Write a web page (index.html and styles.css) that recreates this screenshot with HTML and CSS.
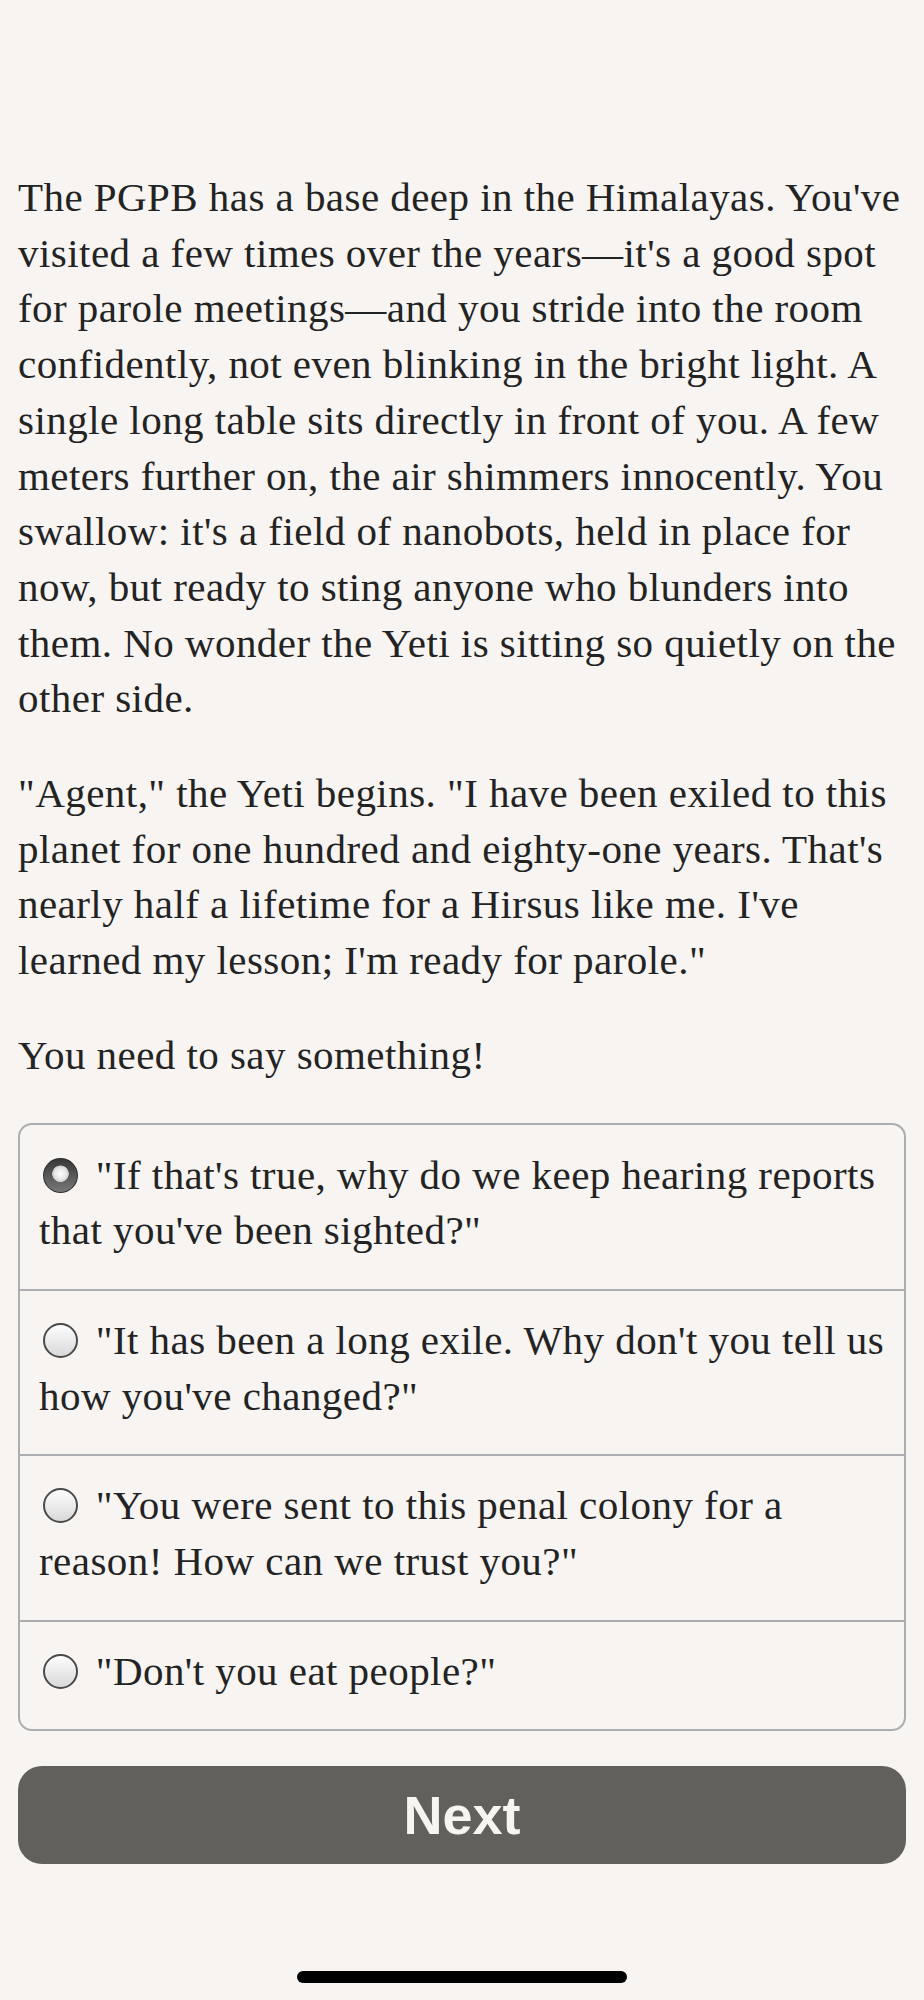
FILE: index.html
```html
<!DOCTYPE html>
<html lang="en">
<head>
  <meta charset="UTF-8" />
  <meta name="viewport" content="width=device-width, initial-scale=1.0"/>
  <title>Parole Hearing</title>
  <link rel="stylesheet" href="styles.css">
</head>
<body>

  <div class="story">
    <p>The PGPB has a base deep in the Himalayas. You've visited a few times over the years&mdash;it's a good spot for parole meetings&mdash;and you stride into the room confidently, not even blinking in the bright light. A single long table sits directly in front of you. A few meters further on, the air shimmers innocently. You swallow: it's a field of nanobots, held in place for now, but ready to sting anyone who blunders into them. No wonder the Yeti is sitting so quietly on the other side.</p>
    <p>"Agent," the Yeti begins. "I have been exiled to this planet for one hundred and eighty-one years. That's nearly half a lifetime for a Hirsus like me. I've learned my lesson; I'm ready for parole."</p>
    <p>You need to say something!</p>

    <form class="choices" onsubmit="return false;">
      <label class="choice"><input type="radio" name="choice" value="sighted" checked> "If that's true, why do we keep hearing reports that you've been sighted?"</label>
      <label class="choice"><input type="radio" name="choice" value="changed"> "It has been a long exile. Why don't you tell us how you've changed?"</label>
      <label class="choice"><input type="radio" name="choice" value="reason"> "You were sent to this penal colony for a reason! How can we trust you?"</label>
      <label class="choice"><input type="radio" name="choice" value="eat"> "Don't you eat people?"</label>
    </form>

    <button class="next-btn">Next</button>
  </div>

  <div class="home-bar"></div>

</body>
</html>
```

FILE: styles.css
```css
body {
  margin: 0;
  background: #f7f4f1;
  color: #232323;
  font-family: 'Liberation Serif', serif;
}

.story {
  padding: 170px 18px 0;
}

.story p {
  margin: 0 0 39px;
  font-size: 41px;
  line-height: 55.7px;
  letter-spacing: 0.45px;
}

.choices {
  border: 2px solid #abadb0;
  border-radius: 14px;
  margin: 0;
}

.choice {
  display: block;
  padding: 22px 19px 30px;
  font-size: 41px;
  line-height: 55.7px;
  letter-spacing: 0.45px;
  border-top: 2px solid #abadb0;
}

.choice:first-child {
  border-top: none;
  padding-top: 23px;
}

.choice input {
  appearance: none;
  -webkit-appearance: none;
  width: 35px;
  height: 35px;
  margin: 0 7px 0 4px;
  vertical-align: -4px;
  border-radius: 50%;
  border: 2px solid #4a4a4a;
  background: linear-gradient(#fdfdfd, #d9d9d9);
  box-sizing: border-box;
}

.choice input:checked {
  border: none;
  background: radial-gradient(circle at 50% 45%, #ffffff 0, #e4e4e4 6px, #c9c9c9 8px, transparent 8.5px),
              linear-gradient(#353535, #7a7a7a);
  box-shadow: inset 0 0 0 1px #2c2c2c;
}

.next-btn {
  display: block;
  width: 100%;
  height: 98px;
  margin-top: 35px;
  background: #62605d;
  color: #f7f4f1;
  font-family: 'Liberation Sans', Arial, sans-serif;
  font-weight: bold;
  font-size: 54px;
  border: none;
  border-radius: 24px;
  cursor: pointer;
}

.home-bar {
  width: 330px;
  height: 12px;
  margin: 107px auto 0;
  background: #000;
  border-radius: 6px;
}
```
